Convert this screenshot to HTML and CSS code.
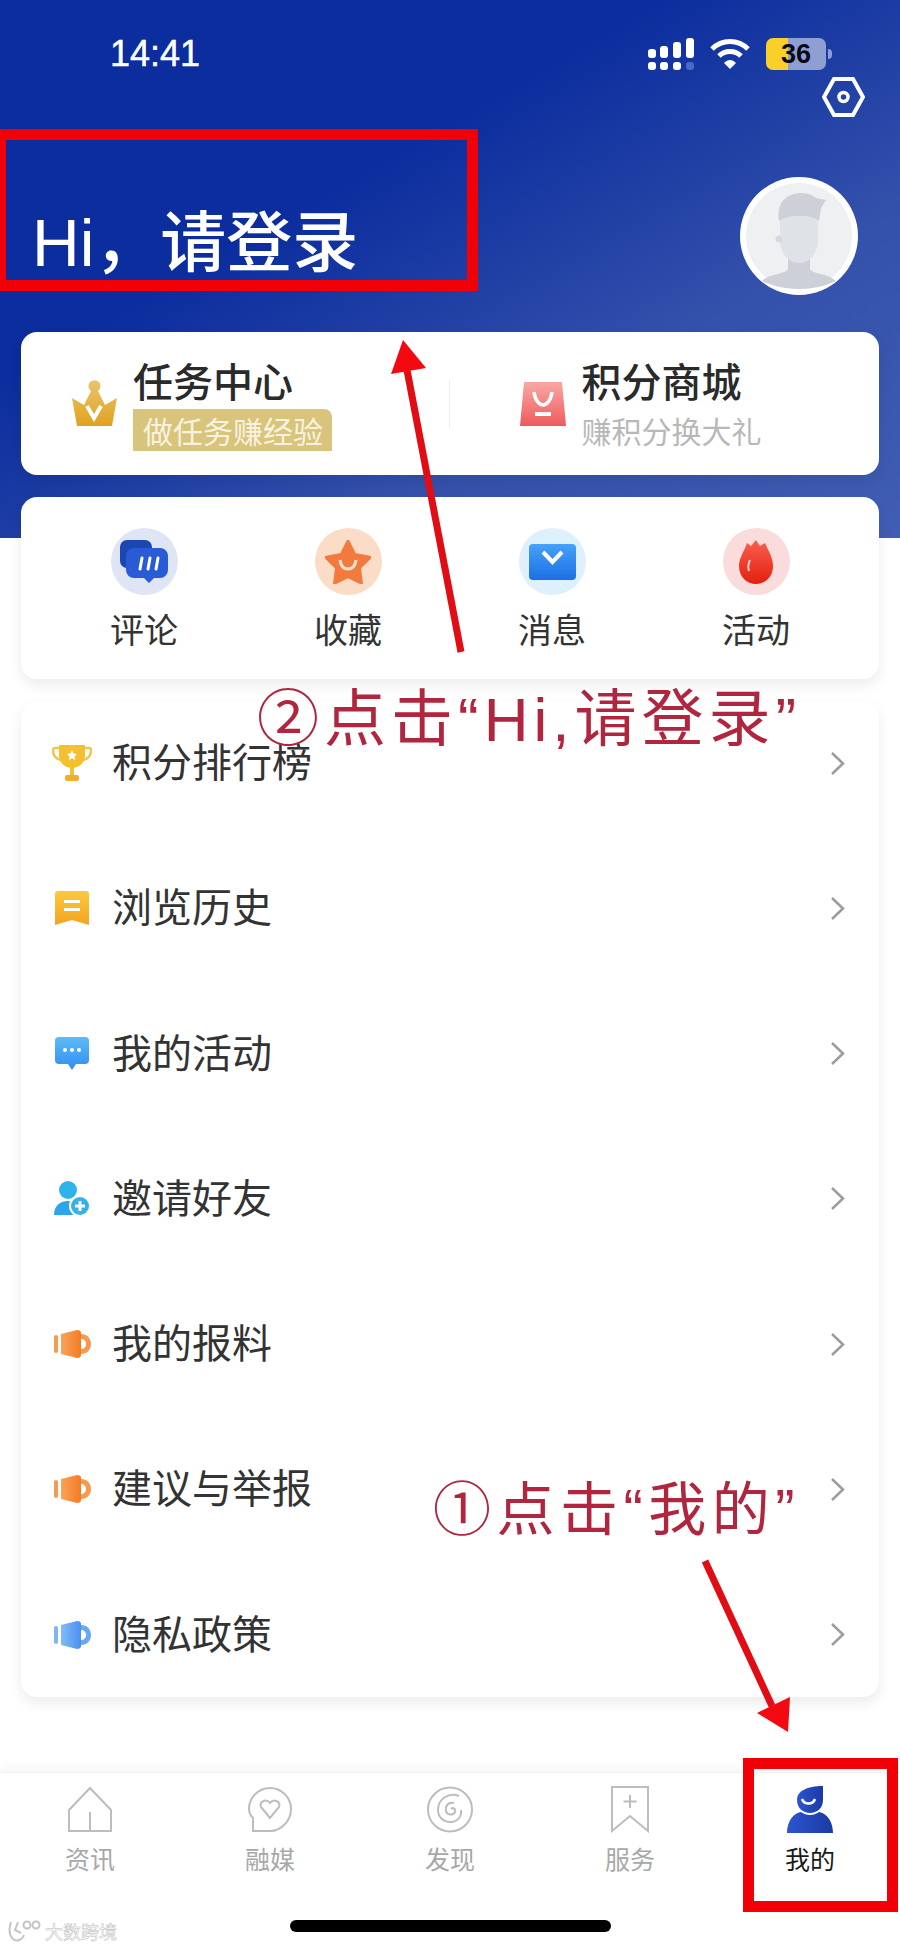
FILE: index.html
```html
<!DOCTYPE html>
<html lang="zh-CN">
<head>
    <meta charset="UTF-8">
    <meta name="viewport" content="width=device-width, initial-scale=1.0">
    <title>我的</title>
    <link rel="stylesheet" href="styles.css">
</head>
<body>
    <div class="page">
        <!-- status bar -->
        <div class="status">
            <span class="time">14:41</span>
            <div class="status-icons">
                <svg width="46" height="32" viewBox="0 0 46 32" fill="#fff">
                    <rect x="0" y="11" width="8" height="9" rx="3"/>
                    <rect x="12" y="8" width="8" height="12" rx="3"/>
                    <rect x="25" y="4" width="8" height="16" rx="3"/>
                    <rect x="38" y="0" width="8" height="20" rx="3"/>
                    <rect x="0" y="24" width="8" height="8" rx="3"/>
                    <rect x="12" y="24" width="8" height="8" rx="3"/>
                    <rect x="25" y="24" width="8" height="8" rx="3"/>
                    <rect x="38" y="24" width="8" height="8" rx="3" fill="#4a68c4"/>
                </svg>
                <svg class="wifi" width="40" height="31" viewBox="0 0 40 31" fill="none" stroke="#fff" stroke-width="5">
                    <path d="M2 11C12 1 28 1 38 11"/>
                    <path d="M9 18C15 12 25 12 31 18"/>
                    <path d="M14 25L20 31L26 25C22 21 18 21 14 25Z" fill="#fff" stroke="none"/>
                </svg>
                <div class="battery"><span>36</span></div>
                <div class="battery-tip"></div>
            </div>
        </div>

        <div class="settings">
            <svg width="43" height="40" viewBox="0 0 43 40" fill="none" stroke="#fff" stroke-width="4">
                <path d="M12 2H31L41 20L31 38H12L2 20Z"/>
                <circle cx="21.5" cy="20" r="4.5" stroke-width="3.5"/>
            </svg>
        </div>

        <div class="greet">
            <h1 class="greet-text">Hi，请登录</h1>
            <div class="avatar">
                <svg width="106" height="106" viewBox="0 0 106 106">
                    <circle cx="53" cy="53" r="53" fill="#eff0f2"/>
                    <path d="M16 98C24 90 38 92 42 86V66H64V86C68 92 82 90 90 98C80 103 66 106 53 106C40 106 26 103 16 98Z" fill="#cdd0d8"/>
                    <path d="M34 30H72V56C72 72 62 80 53 80C44 80 34 72 34 56Z" fill="#dfe2e6"/>
                    <path d="M33 38C30 18 42 10 56 10C62 10 68 13 70 15L80 17L75 25L73 38C66 31 42 31 33 38Z" fill="#cdd0d8"/>
                    <circle cx="33" cy="56" r="3.500" fill="#d5d8de"/>
                </svg>
            </div>
        </div>

        <!-- task / points -->
        <div class="card task-card">
            <div class="task-item task-left">
                <svg width="47" height="47" viewBox="0 0 47 47">
                    <defs>
                        <linearGradient id="gold" x1="0" y1="0" x2="0" y2="1">
                            <stop offset="0" stop-color="#e9c56f"/>
                            <stop offset="1" stop-color="#e0a21f"/>
                        </linearGradient>
                    </defs>
                    <path d="M1 18L13 25L20 11A6 6 0 1 1 27 11L34 25L46 18L41 46H6Z" fill="url(#gold)"/>
                    <path d="M16 26L23 38L30 26" fill="none" stroke="#fff" stroke-width="4"/>
                </svg>
                <div class="task-text">
                    <div class="task-title">任务中心</div>
                    <div class="task-tag">做任务赚经验</div>
                </div>
            </div>
            <div class="task-divider"></div>
            <div class="task-item task-right">
                <svg width="46" height="46" viewBox="0 0 46 46">
                    <defs>
                        <linearGradient id="bag" x1="0" y1="0" x2="0" y2="1">
                            <stop offset="0" stop-color="#f9a9a4"/>
                            <stop offset="1" stop-color="#f0595c"/>
                        </linearGradient>
                    </defs>
                    <path d="M4 1H42L46 45H0Z" fill="url(#bag)"/>
                    <path d="M14 11C15 20 20 24 23 24C26 24 31 20 32 11" fill="none" stroke="#fff" stroke-width="3.5"/>
                    <rect x="15" y="31" width="16" height="4" fill="#fff"/>
                </svg>
                <div class="task-text">
                    <div class="task-title">积分商城</div>
                    <div class="task-sub">赚积分换大礼</div>
                </div>
            </div>
        </div>

        <!-- shortcuts -->
        <div class="card quick-card">
            <div class="quick-item">
                <div class="quick-circle bg-blue">
                    <svg width="48" height="44" viewBox="0 0 48 44">
                        <rect x="0" y="0" width="32" height="28" rx="7" fill="#1c46b0"/>
                        <path d="M14 8H40A8 8 0 0 1 48 16V30A8 8 0 0 1 40 38H34L29 43L24 38H14A8 8 0 0 1 6 30V16A8 8 0 0 1 14 8Z" fill="#2a5bd6"/>
                        <path d="M20 29L22 18M28 29L30 18M36 29L38 18" stroke="#fff" stroke-width="3" stroke-linecap="round"/>
                    </svg>
                </div>
                <span>评论</span>
            </div>
            <div class="quick-item">
                <div class="quick-circle bg-orange">
                    <svg width="46" height="44" viewBox="0 0 46 44">
                        <path d="M23 0L30 14L46 17L35 28L37 44L23 37L9 44L11 28L0 17L16 14Z" fill="#f27a3e" stroke="#f27a3e" stroke-width="2" stroke-linejoin="round"/>
                        <path d="M15 20C16 27 20 29 23 29C26 29 30 27 31 20" fill="none" stroke="#fde3cf" stroke-width="3"/>
                    </svg>
                </div>
                <span>收藏</span>
            </div>
            <div class="quick-item">
                <div class="quick-circle bg-sky">
                    <svg width="47" height="36" viewBox="0 0 47 36">
                        <defs>
                            <linearGradient id="mail" x1="0" y1="0" x2="0" y2="1">
                                <stop offset="0" stop-color="#45a2f7"/>
                                <stop offset="1" stop-color="#1d6fe6"/>
                            </linearGradient>
                        </defs>
                        <rect width="47" height="36" rx="4" fill="url(#mail)"/>
                        <path d="M14 8L23.5 18L33 8" fill="none" stroke="#fff" stroke-width="4"/>
                    </svg>
                </div>
                <span>消息</span>
            </div>
            <div class="quick-item">
                <div class="quick-circle bg-red">
                    <svg width="34" height="44" viewBox="0 0 34 44">
                        <defs>
                            <linearGradient id="flame" x1="0" y1="0" x2="0" y2="1">
                                <stop offset="0" stop-color="#f9604f"/>
                                <stop offset="1" stop-color="#e41f10"/>
                            </linearGradient>
                        </defs>
                        <path d="M17 0L21 6L26 3C30 12 34 18 34 26C34 37 26 44 17 44C8 44 0 37 0 26C0 18 5 12 8 3L12 6Z" fill="url(#flame)"/>
                        <path d="M11 20C9 24 9 28 10 31" fill="none" stroke="#fbd0c8" stroke-width="2"/>
                    </svg>
                </div>
                <span>活动</span>
            </div>
        </div>

        <!-- menu list -->
        <div class="card list-card">
            <div class="row">
                <div class="row-icon">
                    <svg width="40" height="36" viewBox="0 0 40 36">
                        <path d="M8 3H3A2 2 0 0 0 1 5C1 11 5 15 10 15M32 3H37A2 2 0 0 1 39 5C39 11 35 15 30 15" fill="none" stroke="#f2c54b" stroke-width="2.5"/>
                        <path d="M7 0H33V10C33 18 27 23 20 23C13 23 7 18 7 10Z" fill="#f5c02f"/>
                        <rect x="18" y="22" width="4" height="8" fill="#f5c02f"/>
                        <rect x="13" y="30" width="14" height="6" rx="2" fill="#f0ae2a"/>
                        <path d="M20 5L21.5 8.5L25 9L22.5 11.500L23 15L20 13.300L17 15L17.500 11.500L15 9L18.500 8.500Z" fill="#fff"/>
                    </svg>
                </div>
                <span class="row-label">积分排行榜</span>
                <svg class="chevron" width="15" height="25" viewBox="0 0 15 25"><path d="M2 2L13 12.500L2 23" fill="none" stroke="#9c9c9c" stroke-width="2.500"/></svg>
            </div>
            <div class="row">
                <div class="row-icon">
                    <svg width="34" height="34" viewBox="0 0 34 34">
                        <defs>
                            <linearGradient id="book" x1="0" y1="0" x2="0" y2="1">
                                <stop offset="0" stop-color="#fbc93d"/>
                                <stop offset="1" stop-color="#f3a41f"/>
                            </linearGradient>
                        </defs>
                        <path d="M3 0H31A3 3 0 0 1 34 3V34L17 29L0 34V3A3 3 0 0 1 3 0Z" fill="url(#book)"/>
                        <rect x="9" y="9" width="16" height="3" fill="#fff"/>
                        <rect x="9" y="17" width="16" height="3" fill="#fff"/>
                    </svg>
                </div>
                <span class="row-label">浏览历史</span>
                <svg class="chevron" width="15" height="25" viewBox="0 0 15 25"><path d="M2 2L13 12.500L2 23" fill="none" stroke="#9c9c9c" stroke-width="2.500"/></svg>
            </div>
            <div class="row">
                <div class="row-icon">
                    <svg width="34" height="33" viewBox="0 0 34 33">
                        <defs>
                            <linearGradient id="chat" x1="0" y1="0" x2="0" y2="1">
                                <stop offset="0" stop-color="#5cbcf8"/>
                                <stop offset="1" stop-color="#2f8df0"/>
                            </linearGradient>
                        </defs>
                        <path d="M4 0H30A4 4 0 0 1 34 4V23A4 4 0 0 1 30 27H21L17 33L13 27H4A4 4 0 0 1 0 23V4A4 4 0 0 1 4 0Z" fill="url(#chat)"/>
                        <circle cx="10" cy="13" r="2" fill="#fff"/>
                        <circle cx="17" cy="13" r="2" fill="#fff"/>
                        <circle cx="24" cy="13" r="2" fill="#fff"/>
                    </svg>
                </div>
                <span class="row-label">我的活动</span>
                <svg class="chevron" width="15" height="25" viewBox="0 0 15 25"><path d="M2 2L13 12.500L2 23" fill="none" stroke="#9c9c9c" stroke-width="2.500"/></svg>
            </div>
            <div class="row">
                <div class="row-icon">
                    <svg width="37" height="36" viewBox="0 0 37 36">
                        <circle cx="14" cy="9" r="9" fill="#2fb4ea"/>
                        <path d="M0 34C0 24 7 20 14 20C21 20 28 24 28 34Z" fill="#2ba6e6"/>
                        <circle cx="26" cy="25" r="11" fill="#fff"/>
                        <circle cx="26" cy="25" r="9" fill="#35b1ea"/>
                        <path d="M21 25H31M26 20V30" stroke="#fff" stroke-width="3"/>
                    </svg>
                </div>
                <span class="row-label">邀请好友</span>
                <svg class="chevron" width="15" height="25" viewBox="0 0 15 25"><path d="M2 2L13 12.500L2 23" fill="none" stroke="#9c9c9c" stroke-width="2.500"/></svg>
            </div>
            <div class="row">
                <div class="row-icon">
                    <svg width="37" height="28" viewBox="0 0 37 28">
                        <defs>
                            <linearGradient id="mugA" x1="0" y1="0" x2="1" y2="0">
                                <stop offset="0" stop-color="#f8a35b"/>
                                <stop offset="1" stop-color="#f47c22"/>
                            </linearGradient>
                        </defs>
                        <rect x="0" y="5" width="4" height="18" rx="2" fill="#f59a4e"/>
                        <path d="M7 4L23 0Q27 0 27 3L27 25Q27 28 23 28L7 24Z" fill="url(#mugA)"/>
                        <path d="M27 4C33 4 37 8 37 14C37 20 33 24 27 24V19C30 19 32 17 32 14C32 11 30 9 27 9Z" fill="#f59a4e"/>
                    </svg>
                </div>
                <span class="row-label">我的报料</span>
                <svg class="chevron" width="15" height="25" viewBox="0 0 15 25"><path d="M2 2L13 12.500L2 23" fill="none" stroke="#9c9c9c" stroke-width="2.500"/></svg>
            </div>
            <div class="row">
                <div class="row-icon">
                    <svg width="37" height="28" viewBox="0 0 37 28">
                        <rect x="0" y="5" width="4" height="18" rx="2" fill="#f59a4e"/>
                        <path d="M7 4L23 0Q27 0 27 3L27 25Q27 28 23 28L7 24Z" fill="url(#mugA)"/>
                        <path d="M27 4C33 4 37 8 37 14C37 20 33 24 27 24V19C30 19 32 17 32 14C32 11 30 9 27 9Z" fill="#f59a4e"/>
                    </svg>
                </div>
                <span class="row-label">建议与举报</span>
                <svg class="chevron" width="15" height="25" viewBox="0 0 15 25"><path d="M2 2L13 12.500L2 23" fill="none" stroke="#9c9c9c" stroke-width="2.500"/></svg>
            </div>
            <div class="row">
                <div class="row-icon">
                    <svg width="37" height="28" viewBox="0 0 37 28">
                        <defs>
                            <linearGradient id="mugB" x1="0" y1="0" x2="1" y2="0">
                                <stop offset="0" stop-color="#82bcf8"/>
                                <stop offset="1" stop-color="#4b8ff0"/>
                            </linearGradient>
                        </defs>
                        <rect x="0" y="5" width="4" height="18" rx="2" fill="#7db6f6"/>
                        <path d="M7 4L23 0Q27 0 27 3L27 25Q27 28 23 28L7 24Z" fill="url(#mugB)"/>
                        <path d="M27 4C33 4 37 8 37 14C37 20 33 24 27 24V19C30 19 32 17 32 14C32 11 30 9 27 9Z" fill="#6aa8f4"/>
                    </svg>
                </div>
                <span class="row-label">隐私政策</span>
                <svg class="chevron" width="15" height="25" viewBox="0 0 15 25"><path d="M2 2L13 12.500L2 23" fill="none" stroke="#9c9c9c" stroke-width="2.500"/></svg>
            </div>
        </div>

        <!-- bottom tabs -->
        <div class="tabbar">
            <div class="tab">
                <svg width="46" height="47" viewBox="0 0 46 47" fill="none" stroke="#bdbdbd" stroke-width="2">
                    <path d="M23 2L44 24V45H2V24Z"/>
                    <path d="M23 26V45"/>
                </svg>
                <span>资讯</span>
            </div>
            <div class="tab">
                <svg width="46" height="47" viewBox="0 0 46 47" fill="none" stroke="#bdbdbd" stroke-width="2">
                    <path d="M23 2C34 2 44 11 44 23C44 35 34 45 23 45H6V32C3 29 2 26 2 23C2 11 12 2 23 2Z"/>
                    <path d="M23 32L14 21C12 16 19 12 23 17C27 12 34 16 32 21Z"/>
                </svg>
                <span>融媒</span>
            </div>
            <div class="tab">
                <svg width="48" height="47" viewBox="0 0 48 47" fill="none" stroke="#bdbdbd" stroke-width="2">
                    <circle cx="24" cy="23.500" r="22"/>
                    <path d="M33 10C24 6 12 12 12 24C12 32 19 37 26 36C33 35 36 29 35 24"/>
                    <path d="M28 17C22 16 19 20 20 25C21 29 27 30 29 26C30 23 27 21 25 23"/>
                </svg>
                <span>发现</span>
            </div>
            <div class="tab">
                <svg width="38" height="47" viewBox="0 0 38 47" fill="none" stroke="#bdbdbd" stroke-width="2">
                    <path d="M1 1H37V45L19 30L1 45Z"/>
                    <path d="M19 9V22M12.500 15.500H25.500"/>
                </svg>
                <span>服务</span>
            </div>
            <div class="tab tab-active">
                <svg width="46" height="47" viewBox="0 0 46 47">
                    <defs>
                        <linearGradient id="me" x1="0" y1="0" x2="1" y2="0">
                            <stop offset="0" stop-color="#2c55cf"/>
                            <stop offset="1" stop-color="#1c3aa5"/>
                        </linearGradient>
                    </defs>
                    <path d="M36 0V14C36 22 30 27 23 27C16 27 10 22 10 14C10 5 20 0 36 0Z" fill="url(#me)"/>
                    <path d="M15 13C17 19 26 19 28 13" fill="none" stroke="#fff" stroke-width="2.500"/>
                    <path d="M0 47C0 36 6 27 14 26C19 30 27 30 32 26C40 27 46 36 46 47Z" fill="url(#me)"/>
                </svg>
                <span>我的</span>
            </div>
        </div>

        <div class="home-bar"></div>
        <div class="watermark">
            <svg width="34" height="22" viewBox="0 0 34 22" fill="none" stroke="#c4c4c4" stroke-width="2">
                <path d="M3 2C1 8 1 15 5 19C9 22 14 20 16 15"/>
                <path d="M10 2L7 10L13 13"/>
                <circle cx="19" cy="5" r="3.500"/>
                <circle cx="28" cy="5" r="3.500"/>
            </svg>
            <span>大数跨境</span>
        </div>

        <!-- tutorial annotations on top of the screenshot -->
        <div class="red-box box-greet"></div>
        <div class="red-box box-tab"></div>
        <svg class="arrows" width="900" height="1948" viewBox="0 0 900 1948">
            <path d="M461 652L407 370" stroke="#e00d14" stroke-width="7"/>
            <path d="M403 340L391 374L426 368Z" fill="#f20a10"/>
            <path d="M705 1561L772 1706" stroke="#e00d14" stroke-width="7"/>
            <path d="M788 1732L757 1713L790 1697Z" fill="#f20a10"/>
        </svg>
        <div class="note note-login">②点击“Hi,请登录”</div>
        <div class="note note-mine">①点击“我的”</div>
    </div>
</body>
</html>
```

FILE: styles.css
```css
* {
    box-sizing: border-box;
}

body {
    margin: 0;
    font-family: "Noto Sans CJK SC", "Liberation Sans", sans-serif;
    color: #333;
}

.page {
    position: relative;
    width: 900px;
    height: 1948px;
    overflow: hidden;
    background-color: #fff;
    background-image: linear-gradient(150deg, #0b2d9e 36%, #3350ab 68%, #415eb4 100%);
    background-size: 100% 538px;
    background-repeat: no-repeat;
}

.status {
    display: flex;
    justify-content: space-between;
    align-items: center;
    height: 72px;
    padding: 35px 68px 0 110px;
}

.time {
    font-family: "Liberation Sans", sans-serif;
    font-size: 36px;
    color: #fff;
    -webkit-text-stroke: 0.5px #fff;
}

.status-icons {
    display: flex;
    align-items: center;
}

.wifi {
    margin-left: 16px;
    margin-right: 16px;
}

.battery {
    width: 60px;
    height: 32px;
    border-radius: 7px;
    background: linear-gradient(to right, #f9cf2a 37%, #8f9fd2 37%);
    text-align: center;
    font-family: "Liberation Sans", sans-serif;
    font-size: 27px;
    font-weight: bold;
    line-height: 32px;
    color: #0a0a14;
}

.battery-tip {
    width: 4px;
    height: 10px;
    margin-left: 2px;
    border-radius: 0 4px 4px 0;
    background: #8f9fd2;
}

.settings {
    display: flex;
    justify-content: flex-end;
    height: 40px;
    margin-top: 5px;
    padding-right: 35px;
}

.greet {
    display: flex;
    justify-content: space-between;
    align-items: center;
    height: 118px;
    margin-top: 60px;
    margin-bottom: 37px;
    padding: 0 42px 0 32px;
}

.greet-text {
    margin: 2px 0 0;
    font-family: "Liberation Sans", "Noto Sans CJK SC", sans-serif;
    font-size: 66px;
    font-weight: 500;
    color: #fff;
}

.avatar {
    display: flex;
    align-items: center;
    justify-content: center;
    width: 118px;
    height: 118px;
    border-radius: 50%;
    background: #fff;
}

.card {
    margin: 0 21px;
    border-radius: 16px;
    background: #fff;
    box-shadow: 0 6px 14px rgba(0, 0, 0, 0.08);
}

.task-card {
    display: flex;
    align-items: center;
    height: 143px;
}

.task-item {
    display: flex;
    align-items: center;
    width: 430px;
}

.task-left {
    padding-left: 50px;
    gap: 15px;
}

.task-right {
    padding-left: 70px;
    gap: 15px;
}

.task-divider {
    width: 1px;
    height: 48px;
    background: #ececec;
}

.task-text {
    display: flex;
    flex-direction: column;
    align-items: flex-start;
}

.task-title {
    font-size: 40px;
    font-weight: 500;
    line-height: 46px;
    color: #2a2a2a;
}

.task-tag {
    margin-top: 6px;
    padding: 0 9px 0 10px;
    border-radius: 0 8px 0 0;
    background: #d9c47c;
    font-size: 30px;
    line-height: 42px;
    color: #f8f3e0;
}

.task-sub {
    margin-top: 6px;
    font-size: 30px;
    line-height: 42px;
    color: #b8b8b8;
}

.quick-card {
    display: grid;
    grid-template-columns: repeat(4, 1fr);
    align-items: start;
    height: 182px;
    margin-top: 22px;
    padding: 31px 21px 0;
}

.quick-item {
    display: flex;
    flex-direction: column;
    align-items: center;
    font-size: 34px;
    line-height: 48px;
    color: #333;
}

.quick-item span {
    margin-top: 10px;
}

.quick-circle {
    display: flex;
    align-items: center;
    justify-content: center;
    width: 67px;
    height: 67px;
    border-radius: 50%;
}

.bg-blue {
    background: #dfe5f4;
}

.bg-orange {
    background: #fbdcc6;
}

.bg-sky {
    background: #dff0fd;
}

.bg-red {
    background: #fbdcdc;
}

.list-card {
    display: flex;
    flex-direction: column;
    gap: 21.3px;
    margin-top: 22px;
}

.row {
    display: flex;
    align-items: center;
    height: 124px;
    padding: 0 34px 0 31px;
}

.row-icon {
    display: flex;
    align-items: center;
    justify-content: center;
    width: 40px;
    margin-right: 20px;
}

.row-label {
    flex: 1;
    padding-bottom: 6px;
    font-size: 40px;
    color: #333;
}

.tabbar {
    display: grid;
    grid-template-columns: repeat(5, 1fr);
    height: 130px;
    margin-top: 75px;
    padding-top: 13px;
    border-top: 1px solid #f0f0f0;
    box-shadow: 0 -6px 8px rgba(0, 0, 0, 0.03);
}

.tab {
    display: flex;
    flex-direction: column;
    align-items: center;
    font-size: 25px;
    line-height: 36px;
    color: #a8a8a8;
}

.tab span {
    margin-top: 7px;
}

.tab-active {
    color: #1a1a1a;
}

.home-bar {
    width: 321px;
    height: 12px;
    margin: 18px auto 0;
    border-radius: 6px;
    background: #000;
}

.watermark {
    position: absolute;
    left: 8px;
    top: 1920px;
    display: flex;
    align-items: center;
    gap: 3px;
    font-size: 18px;
    line-height: 22px;
    color: #fff;
    -webkit-text-stroke: 0.5px #bdbdbd;
}

.red-box {
    position: absolute;
    border: 11px solid #f20008;
}

.box-greet {
    left: -5px;
    top: 129px;
    width: 483px;
    height: 162px;
}

.box-tab {
    left: 743px;
    top: 1758px;
    width: 155px;
    height: 154px;
}

.arrows {
    position: absolute;
    left: 0;
    top: 0;
}

.note {
    position: absolute;
    font-family: "Liberation Sans", "Noto Sans CJK SC", sans-serif;
    line-height: 70px;
    white-space: nowrap;
    color: #b0263f;
}

.note-login {
    left: 257px;
    top: 685px;
    font-size: 62px;
    letter-spacing: 5px;
}

.note-mine {
    left: 433px;
    top: 1475px;
    font-size: 58px;
    letter-spacing: 5.5px;
}
```
